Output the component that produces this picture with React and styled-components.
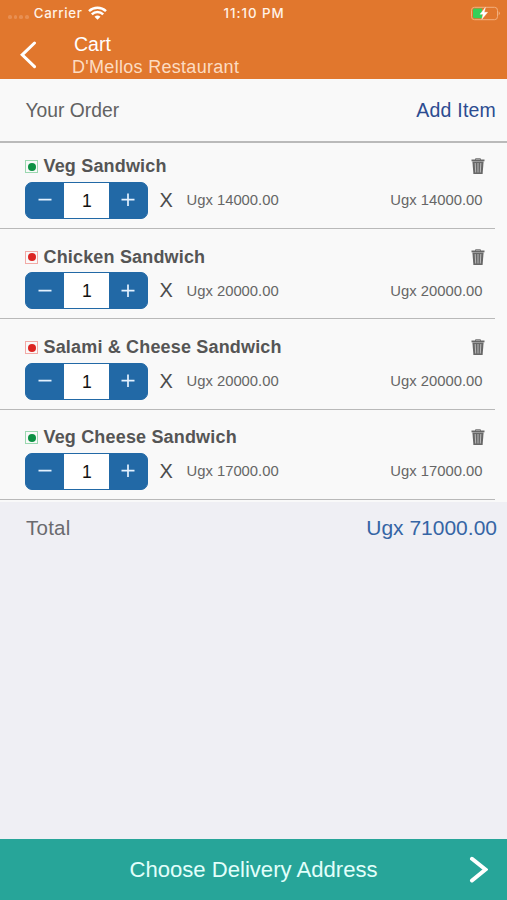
import React, { useState } from 'react'
import styled, { createGlobalStyle } from 'styled-components'

const initialItems = [
  { id: 1, name: 'Veg Sandwich', price: 14000, veg: true, quantity: 1 },
  { id: 2, name: 'Chicken Sandwich', price: 20000, veg: false, quantity: 1 },
  { id: 3, name: 'Salami & Cheese Sandwich', price: 20000, veg: false, quantity: 1 },
  { id: 4, name: 'Veg Cheese Sandwich', price: 17000, veg: true, quantity: 1 },
]

const formatPrice = (amount) => `Ugx ${amount.toFixed(2)}`

const WifiIcon = () => (
  <svg width="19" height="14" viewBox="0 0 19 14" fill="none" stroke="#fff" strokeWidth="2.5">
    <path d="M1 5.2C5.8 .7 13.2 .7 18 5.2" />
    <path d="M3.8 8.3C7 5.3 12 5.3 15.2 8.3" />
    <path d="M6.5 10.7Q9.5 8.1 12.5 10.7L9.5 13.7Z" fill="#fff" stroke="none" />
  </svg>
)

const BatteryIcon = () => (
  <svg width="30" height="15" viewBox="0 0 30 15">
    <rect x="1.5" y="1.3" width="26" height="12.4" rx="3" fill="none" stroke="#f2b07f" />
    <path d="M28.7 5.2Q31 7.3 28.7 9.4Z" fill="#f2b07f" />
    <path d="M4.4 2.6H12V12.2H4.4Q3 12.2 3 10.8V4Q3 2.6 4.4 2.6Z" fill="#35d058" />
    <path d="M15.4 1.5L10 8.2H13.2L11.8 13.2L17.6 6.3H14.2Z" fill="#fff" stroke="#fff" strokeWidth=".4" />
  </svg>
)

const TrashIcon = () => (
  <svg width="14" height="17" viewBox="0 0 14 17">
    <path d="M4.5 1.8V.8H9.5V1.8" fill="none" stroke="#666" strokeWidth="1" />
    <path d="M.5 1.5H13.5V3.3H.5Z" fill="#666" />
    <path d="M1.4 3.5H12.6L11.6 16H2.4Z" fill="#686868" />
    <path d="M4.2 5L4.7 14.5M7 5V14.5M9.8 5L9.3 14.5" stroke="#c4c4c4" strokeWidth=".9" />
  </svg>
)

const CartItem = ({ item, handleQuantityChange, handleRemove }) => (
  <ItemRow>
    <ItemHeading>
      <FoodMark $veg={item.veg} />
      <ItemName>{item.name}</ItemName>
      <IconButton aria-label="Remove" onClick={() => handleRemove(item.id)}>
        <TrashIcon />
      </IconButton>
    </ItemHeading>
    <ItemDetails>
      <Stepper>
        <StepButton aria-label="Less" onClick={() => handleQuantityChange(item.id, -1)}>
          <svg width="14" height="14" stroke="currentColor" strokeWidth="1.7">
            <path d="M.5 6.7H13.5" />
          </svg>
        </StepButton>
        <Quantity>{item.quantity}</Quantity>
        <StepButton aria-label="More" onClick={() => handleQuantityChange(item.id, 1)}>
          <svg width="14" height="14" stroke="currentColor" strokeWidth="1.7">
            <path d="M.5 6.7H13.5M7 .5V13" />
          </svg>
        </StepButton>
      </Stepper>
      <Times>X</Times>
      <Price>{formatPrice(item.price)}</Price>
      <Price $last>{formatPrice(item.price * item.quantity)}</Price>
    </ItemDetails>
  </ItemRow>
)

const App = () => {
  const [items, setItems] = useState(initialItems)

  const handleQuantityChange = (id, step) => {
    setItems(items.map((item) => (
      item.id === id ? { ...item, quantity: Math.max(1, item.quantity + step) } : item
    )))
  }

  const handleRemove = (id) => setItems(items.filter((item) => item.id !== id))

  const total = items.reduce((sum, item) => sum + item.price * item.quantity, 0)

  return (
    <Screen>
      <GlobalStyle />
      <Header>
        <StatusBar>
          <Carrier>
            <Signal><i /><i /><i /><i /></Signal>
            <span>Carrier</span>
            <WifiIcon />
          </Carrier>
          <Clock>11:10 PM</Clock>
          <Battery><BatteryIcon /></Battery>
        </StatusBar>
        <NavBar>
          <IconButton aria-label="Back">
            <svg width="18" height="28" viewBox="0 0 18 28" fill="none" stroke="#fff" strokeWidth="3" strokeLinecap="round">
              <path d="M15.5 2L3.2 13.8L15.5 25.7" />
            </svg>
          </IconButton>
          <Titles>
            <Title>Cart</Title>
            <Subtitle>D'Mellos Restaurant</Subtitle>
          </Titles>
        </NavBar>
      </Header>
      <OrderBar>
        <OrderLabel>Your Order</OrderLabel>
        <AddItem>Add Item</AddItem>
      </OrderBar>
      <ItemList>
        {items.map((item) => (
          <CartItem
            key={item.id}
            item={item}
            handleQuantityChange={handleQuantityChange}
            handleRemove={handleRemove}
          />
        ))}
      </ItemList>
      <TotalRow>
        <TotalLabel>Total</TotalLabel>
        <TotalPrice>{formatPrice(total)}</TotalPrice>
      </TotalRow>
      <Footer>
        <FooterLabel>Choose Delivery Address</FooterLabel>
        <svg width="20" height="28" viewBox="0 0 20 28" fill="none" stroke="#fff" strokeWidth="4" strokeLinecap="round">
          <path d="M4 2.8L17.5 13.5L4 24.5" />
        </svg>
      </Footer>
    </Screen>
  )
}

const GlobalStyle = createGlobalStyle`
  * {
    box-sizing: border-box;
  }

  body {
    margin: 0;
    font-family: "Liberation Sans", Arial, sans-serif;
  }

  button {
    padding: 0;
    border: 0;
    background: none;
    font: inherit;
    color: inherit;
  }

  svg {
    display: block;
    flex: none;
  }
`

const Screen = styled.div`
  display: flex;
  flex-direction: column;
  height: 100vh;
  overflow: hidden;
  background: #efeff4;
`

const Header = styled.header`
  flex: none;
  height: 79px;
  background: #e1772d;
  color: #fff;
`

const StatusBar = styled.div`
  display: grid;
  grid-template-columns: 1fr auto 1fr;
  align-items: center;
  height: 26px;
  padding: 0 7px 0 8px;
  font-family: Inter, sans-serif;
  font-size: 13.3px;
  font-weight: 500;
  color: #fff3e8;
`

const Carrier = styled.div`
  display: flex;
  align-items: center;
  gap: 5px;
  letter-spacing: 0.65px;
`

const Signal = styled.div`
  display: flex;
  gap: 2px;
  padding-top: 8px;

  i {
    width: 3.7px;
    height: 3.7px;
    border-radius: 50%;
    background: #e88f52;
  }
`

const Clock = styled.span`
  letter-spacing: 0.95px;
`

const Battery = styled.div`
  justify-self: end;
`

const NavBar = styled.div`
  display: flex;
  align-items: flex-start;
  padding-left: 19px;

  button {
    margin-top: 15px;
  }
`

const IconButton = styled.button`
  flex: none;
  cursor: pointer;
`

const Titles = styled.div`
  display: flex;
  flex-direction: column;
  padding: 7px 0 0 35px;
`

const Title = styled.span`
  padding-left: 2px;
  font-size: 19.5px;
  line-height: 23px;
`

const Subtitle = styled.span`
  font-size: 18px;
  line-height: 22px;
  letter-spacing: 0.3px;
  color: #fcdcc2;
`

const OrderBar = styled.div`
  display: flex;
  flex: none;
  align-items: center;
  justify-content: space-between;
  height: 64px;
  padding: 0 11px 0 25.5px;
  border-bottom: 2px solid #bababa;
  background: #f9f9f9;
`

const OrderLabel = styled.span`
  padding-top: 1px;
  font-size: 19.3px;
  color: #626262;
`

const AddItem = styled.button`
  font-size: 19.5px;
  letter-spacing: 0.2px;
  color: #2c4c91;
  cursor: pointer;
`

const ItemList = styled.ul`
  flex: none;
  margin: 0;
  padding: 0 12px 2px 0;
  list-style: none;
  background: #f9f9f9;
`

const ItemRow = styled.li`
  display: flex;
  flex-direction: column;
  height: 90.4px;
  padding: 16.2px 0 0 25px;
  border-bottom: 1px solid #b9b9b9;

  &:first-child {
    height: 86px;
    padding-top: 11.6px;
  }
`

const ItemHeading = styled.div`
  display: flex;
  align-items: center;
  height: 24px;
  padding-right: 10px;
`

const FoodMark = styled.span`
  display: flex;
  align-items: center;
  justify-content: center;
  width: 13px;
  height: 13px;
  border: 1px solid ${({ $veg }) => ($veg ? '#9bd8b0' : '#f2aaa6')};

  &::before {
    content: '';
    width: 8px;
    height: 8px;
    border-radius: 50%;
    background: ${({ $veg }) => ($veg ? '#0b9143' : '#dc2522')};
  }
`

const ItemName = styled.span`
  flex: 1;
  padding-left: 5.5px;
  font-size: 18px;
  font-weight: bold;
  letter-spacing: 0.17px;
  color: #555;
`

const ItemDetails = styled.div`
  display: flex;
  align-items: center;
  height: 37px;
  margin-top: 3px;
`

const Stepper = styled.div`
  display: flex;
  width: 122.5px;
  height: 37px;
  overflow: hidden;
  border: 1px solid #2269a6;
  border-radius: 7px;
  background: #2269a6;
`

const StepButton = styled.button`
  display: flex;
  flex: 1;
  align-items: center;
  justify-content: center;
  color: #e4f2ff;
  cursor: pointer;
`

const Quantity = styled.span`
  width: 45px;
  padding-left: 1px;
  background: #fff;
  font-size: 17.5px;
  line-height: 36px;
  text-align: center;
  color: #111;
`

const Times = styled.span`
  width: 39px;
  padding-left: 12px;
  font-size: 20px;
  color: #4c4c4c;
`

const Price = styled.span`
  margin-left: ${({ $last }) => ($last ? 'auto' : '0')};
  padding-right: ${({ $last }) => ($last ? '12.5px' : '0')};
  font-size: 14.8px;
  color: #666;
`

const TotalRow = styled.div`
  display: flex;
  flex: 1;
  align-items: flex-start;
  justify-content: space-between;
  padding: 14px 10px 0 26px;
  line-height: 24px;
`

const TotalLabel = styled.span`
  font-size: 20.5px;
  letter-spacing: 0.25px;
  color: #6a6a6e;
`

const TotalPrice = styled.span`
  font-size: 21px;
  color: #3565a5;
`

const Footer = styled.button`
  display: flex;
  flex: none;
  align-items: center;
  height: 61px;
  padding: 0 19px 0 39px;
  background: #27a599;
  color: #e2fffb;
  cursor: pointer;
`

const FooterLabel = styled.span`
  flex: 1;
  font-size: 22.1px;
  text-align: center;
`

export default App
